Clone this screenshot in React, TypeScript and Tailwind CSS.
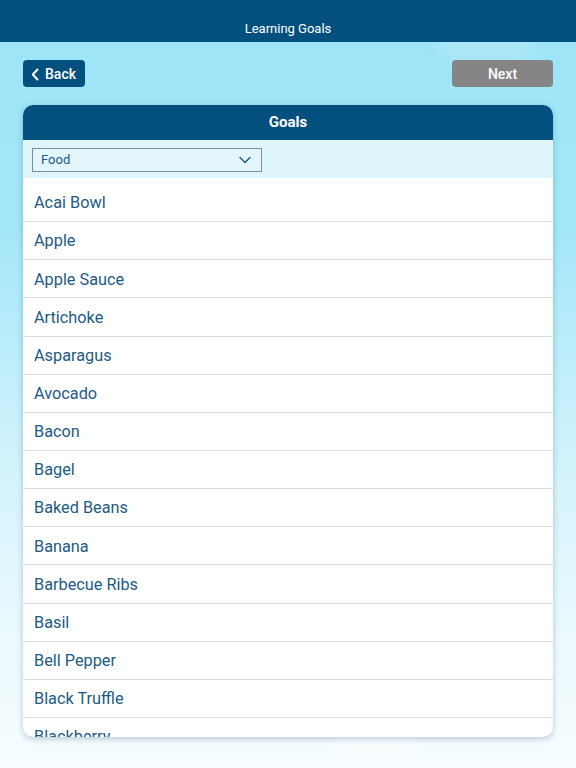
import React from "react";

const items = [
  "Acai Bowl",
  "Apple",
  "Apple Sauce",
  "Artichoke",
  "Asparagus",
  "Avocado",
  "Bacon",
  "Bagel",
  "Baked Beans",
  "Banana",
  "Barbecue Ribs",
  "Basil",
  "Bell Pepper",
  "Black Truffle",
  "Blackberry",
];

export default function App() {
  return (
    <div
      className="relative w-[576px] h-[768px] overflow-hidden bg-[linear-gradient(180deg,#9de4f7_0%,#a4e7f9_30%,#d2f3fc_60%,#edfafe_85%,#f7fdff_100%)]"
      style={{ fontFamily: "Roboto, 'Noto Sans', sans-serif" }}
    >
      <div className="absolute top-[10px] right-[40px] w-[100px] h-[50px] rounded-full bg-white/15 blur-sm" />
      <div className="absolute bottom-0 left-[335px] w-[80px] h-[110px] bg-white/40 blur-md" />
      <div className="relative flex flex-col h-full">
        <div className="h-[42px] bg-[#03507f] flex items-end justify-center pb-[7px]">
          <span className="text-white text-[13px] leading-none">Learning Goals</span>
        </div>
        <div className="flex justify-between items-center px-[23px] mt-[18px]">
          <button className="h-[27px] w-[62px] rounded-[4px] bg-[#03507f] text-white text-[14px] font-medium flex items-center pl-[8px] gap-[6px] pt-[1px]">
            <svg width="8" height="13" viewBox="0 0 8 13" fill="none">
              <path d="M6.5 1.5L1.8 6.5L6.5 11.5" stroke="white" strokeWidth="2" strokeLinecap="round" strokeLinejoin="round" />
            </svg>
            Back
          </button>
          <button className="h-[27px] w-[101px] rounded-[4px] bg-[#858585] text-white text-[14px] font-medium flex items-center justify-center pt-[1px]">
            Next
          </button>
        </div>
        <div className="mx-[23px] mt-[18px] h-[632px] rounded-[10px] bg-white overflow-hidden shadow-[0_2px_6px_rgba(0,60,90,0.25)] flex flex-col">
          <div className="h-[35px] shrink-0 bg-[#03507f] flex items-center justify-center">
            <span className="text-white text-[15px] font-bold">Goals</span>
          </div>
          <div className="h-[38px] shrink-0 bg-[#dff5fc] flex items-center px-[9px] pt-[2px]">
            <div className="w-[230px] h-[24px] border border-[#6f93a8] bg-[#e2f6fc] flex items-center justify-between pl-[8px] pr-[10px]">
              <span className="text-[#1d5a84] text-[13px]">Food</span>
              <svg width="12" height="8" viewBox="0 0 12 8" fill="none">
                <path d="M1 1.5L6 6.5L11 1.5" stroke="#1d5a84" strokeWidth="1.4" strokeLinecap="round" strokeLinejoin="round" />
              </svg>
            </div>
          </div>
          <div className="flex flex-col pt-[6px]">
            {items.map((it) => (
              <div
                key={it}
                className="h-[38.15px] shrink-0 border-b border-[#dcdcdc] flex items-center px-[11px] pt-[2px]"
              >
                <span className="text-[#1d5a84] text-[16.3px]">{it}</span>
              </div>
            ))}
          </div>
        </div>
      </div>
    </div>
  );
}
